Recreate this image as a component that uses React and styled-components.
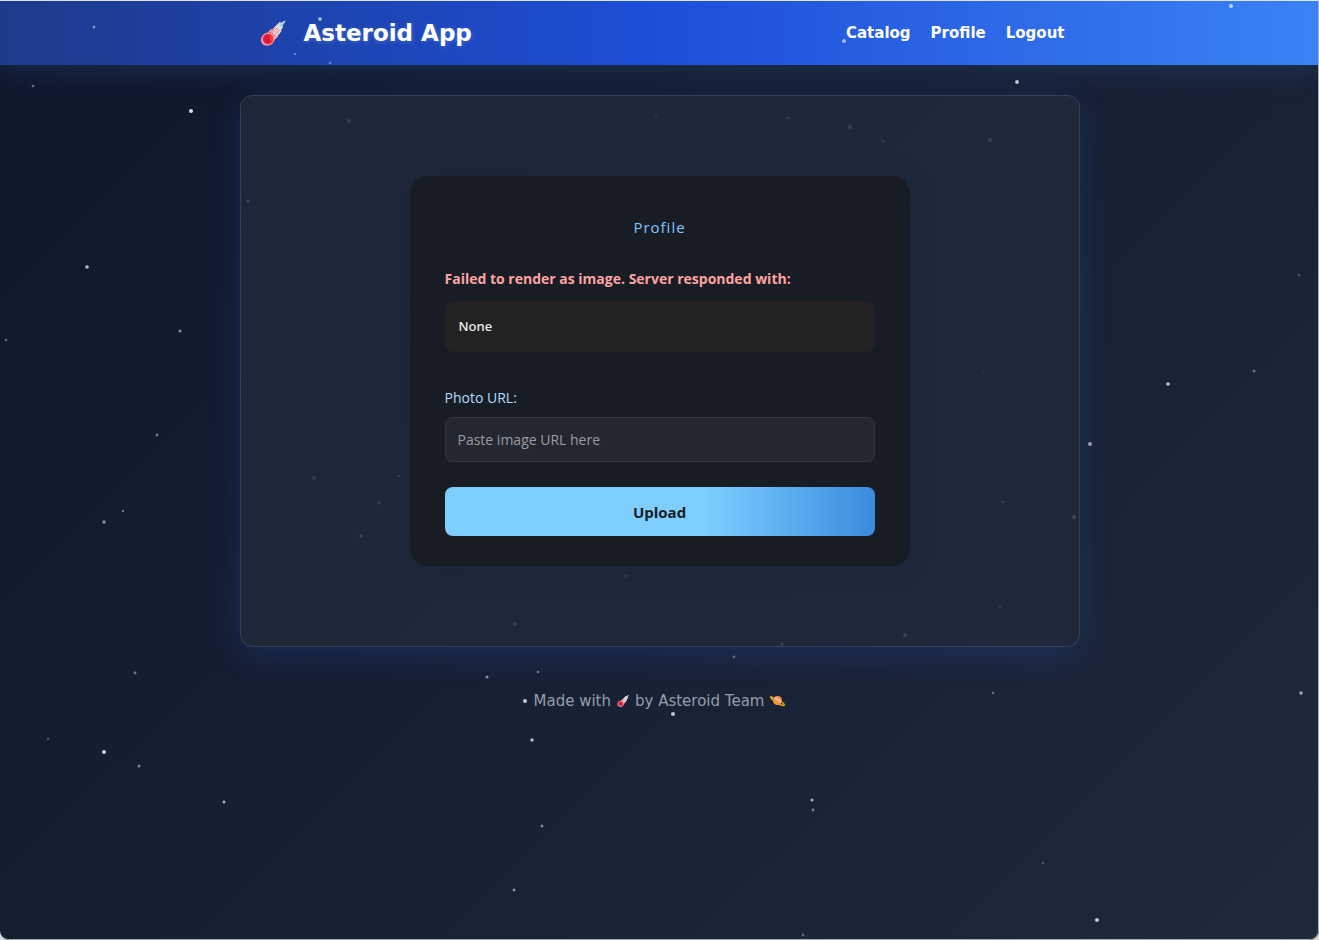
import React, { useState } from "react";
import styled, { createGlobalStyle } from "styled-components";

const GlobalStyle = createGlobalStyle`
    *, *::before, *::after {
        box-sizing: border-box;
    }
    body {
        margin: 0;
        background: #d5d9dc;
        font-family: "Open Sans", "Noto Sans", sans-serif;
        font-size: 14px;
        color: #e2e8f0;
    }
`;

const displayFont = `"DejaVu Sans", sans-serif`;

const Page = styled.div`
    position: relative;
    min-height: 100vh;
    padding-top: 1px;
    display: flex;
    flex-direction: column;
    overflow: hidden;
    border-radius: 0 0 9px 9px;
    background: linear-gradient(135deg, #0f172a, #1e293b);

    /* thin window edge over everything */
    &::after {
        content: "";
        position: absolute;
        inset: 0;
        border: 1px solid #a9acb1;
        border-top-color: #dde3e6;
        border-left: 0;
        border-radius: 0 0 9px 9px;
        pointer-events: none;
    }
`;

const StarField = styled.svg`
    position: absolute;
    top: 0;
    left: 0;
    width: 100%;
    height: 100%;
    pointer-events: none;
`;

const Header = styled.header`
    background: linear-gradient(90deg, #1e3a8a, #1d4ed8, #3b82f6);
    box-shadow: 0 4px 30px rgba(59, 130, 246, 0.2);
`;

const HeaderInner = styled.div`
    max-width: 840px;
    height: 64px;
    margin: 0 auto;
    padding: 0 15px 0 20px;
    display: flex;
    align-items: center;
    justify-content: space-between;
`;

const Brand = styled.h1`
    margin: 0;
    display: flex;
    align-items: center;
    gap: 18px;
    font-family: ${displayFont};
    font-size: 23px;
    font-weight: 700;
    line-height: 30px;
    color: #fff;
    text-shadow: 1px 1px 4px rgba(147, 197, 253, 0.3);
`;

const Nav = styled.nav`
    display: flex;
    gap: 20px;
`;

const NavLink = styled.a`
    font-family: ${displayFont};
    font-size: 15px;
    font-weight: 700;
    line-height: 20px;
    color: #fff;
    text-decoration: none;
`;

const Panel = styled.main`
    width: calc(100% - 32px);
    max-width: 840px;
    margin: 30px auto 0;
    padding: 80px 20px;
    border: 1px solid #324252;
    border-radius: 12px;
    background: linear-gradient(135deg, #1e2738, #1f293b);
    box-shadow: 0 8px 32px rgba(37, 99, 235, 0.2);
`;

const Card = styled.section`
    max-width: 500px;
    margin: 0 auto;
    padding: 40px 35px 30px;
    border-radius: 18px;
    background: #181c24;
    box-shadow: 0 4px 24px rgba(20, 30, 60, 0.3);
`;

const CardTitle = styled.h2`
    margin: 0 0 30px;
    font-size: 15px;
    font-weight: 400;
    line-height: 22px;
    letter-spacing: 1px;
    text-align: center;
    color: #7ecbff;
`;

const ErrorText = styled.p`
    margin: 0 0 11px;
    font-weight: 700;
    line-height: 22px;
    color: #ffa3a3;
`;

const Response = styled.pre`
    margin: 0 0 35px;
    padding: 14px;
    border-radius: 9px;
    background: #222;
    font-family: "Noto Sans", sans-serif;
    font-size: 13px;
    font-weight: 500;
    line-height: 23px;
    color: #eee;
`;

const Label = styled.label`
    display: block;
    margin-bottom: 8px;
    line-height: 22px;
    color: #b3dcff;
`;

const TextInput = styled.input`
    display: block;
    width: 100%;
    height: 45px;
    margin-bottom: 25px;
    padding: 0 12px;
    border: 1px solid #333638;
    border-radius: 7px;
    background: #23272f;
    font-family: inherit;
    font-size: 14px;
    color: #fff;

    &::placeholder {
        color: #999da6;
    }
`;

const UploadButton = styled.button`
    width: 100%;
    height: 49px;
    border: 0;
    border-radius: 8px;
    background: linear-gradient(90deg, #7ecfff 60%, #3a8bde);
    font-family: inherit;
    font-size: 15px;
    font-weight: 700;
    color: #181c24;
    cursor: pointer;
`;

const Footer = styled.footer`
    padding: 44px 0 32px;
    display: flex;
    align-items: center;
    justify-content: center;
    gap: 6px;
    font-family: ${displayFont};
    font-size: 15px;
    line-height: 20px;
    color: #949daa;
`;

const stars = [
    // [x, y, radius, opacity]
    [94, 27, 1.3, 0.5], [320, 19, 1.8, 0.7], [295, 54, 1.3, 0.3], [330, 63, 1.3, 0.35],
    [844, 41, 2, 0.6], [1231, 6, 2, 0.7], [33, 86, 1.3, 0.4], [191, 111, 2, 0.85],
    [1017, 82, 1.9, 0.75], [349, 121, 2, 0.12], [656, 115, 1.6, 0.07], [788, 118, 1.6, 0.1],
    [850, 127, 2, 0.12], [883, 141, 1.6, 0.1], [990, 140, 2, 0.12], [248, 201, 1.8, 0.12],
    [87, 267, 1.8, 0.7], [6, 340, 1.3, 0.35], [180, 331, 1.5, 0.5], [1299, 275, 1.3, 0.25],
    [1254, 371, 1.5, 0.35], [1168, 384, 1.8, 0.75], [1090, 444, 1.9, 0.6], [157, 435, 1.4, 0.4],
    [123, 511, 1.3, 0.35], [104, 522, 1.7, 0.5], [314, 478, 2, 0.1], [399, 476, 1.3, 0.1],
    [379, 503, 1.6, 0.12], [361, 536, 1.8, 0.12], [1003, 502, 1.5, 0.1], [1074, 517, 1.9, 0.15],
    [983, 373, 1.2, 0.06], [626, 576, 1.5, 0.1], [515, 624, 1.8, 0.12], [905, 635, 2, 0.13],
    [1000, 607, 1.5, 0.1], [782, 644, 1.5, 0.12], [734, 657, 1.4, 0.3], [538, 672, 1.3, 0.4],
    [487, 677, 1.5, 0.5], [135, 673, 1.4, 0.4], [993, 693, 1.3, 0.35], [1301, 693, 1.8, 0.6],
    [525, 701, 2, 0.75], [673, 714, 2, 0.75], [532, 740, 1.7, 0.7], [48, 739, 1.2, 0.3],
    [104, 752, 2, 0.8], [139, 766, 1.5, 0.45], [224, 802, 1.5, 0.65], [812, 800, 1.6, 0.6],
    [813, 810, 1.4, 0.4], [542, 826, 1.5, 0.45], [514, 890, 1.5, 0.5], [1043, 863, 1.2, 0.25],
    [1097, 920, 2, 0.75], [803, 935, 1.4, 0.3],
];

function Comet({ size }) {
    return (
        <svg width={size} height={size} viewBox="0 0 26 26" aria-hidden="true">
            <path
                d="M25.5.5 20 3.5l.5-2-4 3.5-1 1-3 3.5-1.5-.5-4 4.5C4 14.5 1 16 1 20c0 3.5 2.5 5.5 6 5.5 4 0 6-3 8-6l3-3v-1.5l3.5-4-.5-1 2-3-1-.5z"
                fill="#f6aaa8"
            />
            <path d="M25.5.5 20 3.5l.5-2-6 5.5-3 4 4 5 3-1 3-4-.5-1 2-3-1-.5z" fill="#e2cfd6" />
            <path d="M25.5.5 20 3.500l-3 4 3 2 3-3-1-.5z" fill="#d3e3ea" />
            <path d="m25.500.5-5 3.500-1 3.500 2-1z" fill="#8fd6ea" />
            <path d="m9 13 6-5m-3 6 6-7m-4 9 5-6m-9 3 3-3" stroke="#df5261" strokeWidth="1" strokeDasharray="1.5 1.5" />
            <circle cx="8" cy="19" r="6.5" fill="#f58b8b" />
            <circle cx="8" cy="19" r="5" fill="#db1745" />
            <path d="M8 14a5 5 0 0 1 2 9.600c1-3 0-6-2-9.600z" fill="#f03a3d" />
        </svg>
    );
}

function Planet() {
    return (
        <svg width="15" height="12" viewBox="0 0 15 12" aria-hidden="true">
            <circle cx="7.5" cy="5.5" r="4.5" fill="#ff9258" />
            <path d="M4 3.5c3 0 5 1.5 7 4" stroke="#ffc29b" strokeWidth="1.5" fill="none" />
            <path
                d="M3.5 3C1 1.5.2 1.3.8 2.5 2 5 10 10.5 13.500 10.500c1.500 0 .5-1.700-1.500-3.500"
                stroke="#e8a21d"
                strokeWidth="1.5"
                fill="none"
            />
        </svg>
    );
}

function App() {
    const [photoUrl, setPhotoUrl] = useState("");

    const handleSubmit = (e) => {
        e.preventDefault();
    };

    return (
        <>
            <GlobalStyle />
            <Page>
                <Header>
                    <HeaderInner>
                        <Brand>
                            <Comet size={26} />
                            <span>Asteroid App</span>
                        </Brand>
                        <Nav>
                            <NavLink href="#catalog">Catalog</NavLink>
                            <NavLink href="#profile">Profile</NavLink>
                            <NavLink href="#logout">Logout</NavLink>
                        </Nav>
                    </HeaderInner>
                </Header>

                <Panel>
                    <Card>
                        <CardTitle>Profile</CardTitle>
                        <ErrorText>Failed to render as image. Server responded with:</ErrorText>
                        <Response>None</Response>
                        <form onSubmit={handleSubmit}>
                            <Label htmlFor="photo-url">Photo URL:</Label>
                            <TextInput
                                id="photo-url"
                                type="text"
                                placeholder="Paste image URL here"
                                value={photoUrl}
                                onChange={(e) => setPhotoUrl(e.target.value)}
                            />
                            <UploadButton type="submit">Upload</UploadButton>
                        </form>
                    </Card>
                </Panel>

                <Footer>
                    <span>Made with</span>
                    <Comet size={12} />
                    <span>by Asteroid Team</span>
                    <Planet />
                </Footer>

                <StarField aria-hidden="true">
                    {stars.map(([x, y, r, opacity]) => (
                        <circle key={`${x}-${y}`} cx={x} cy={y} r={r} fill="#fff" opacity={opacity} />
                    ))}
                </StarField>
            </Page>
        </>
    );
}

export default App;
